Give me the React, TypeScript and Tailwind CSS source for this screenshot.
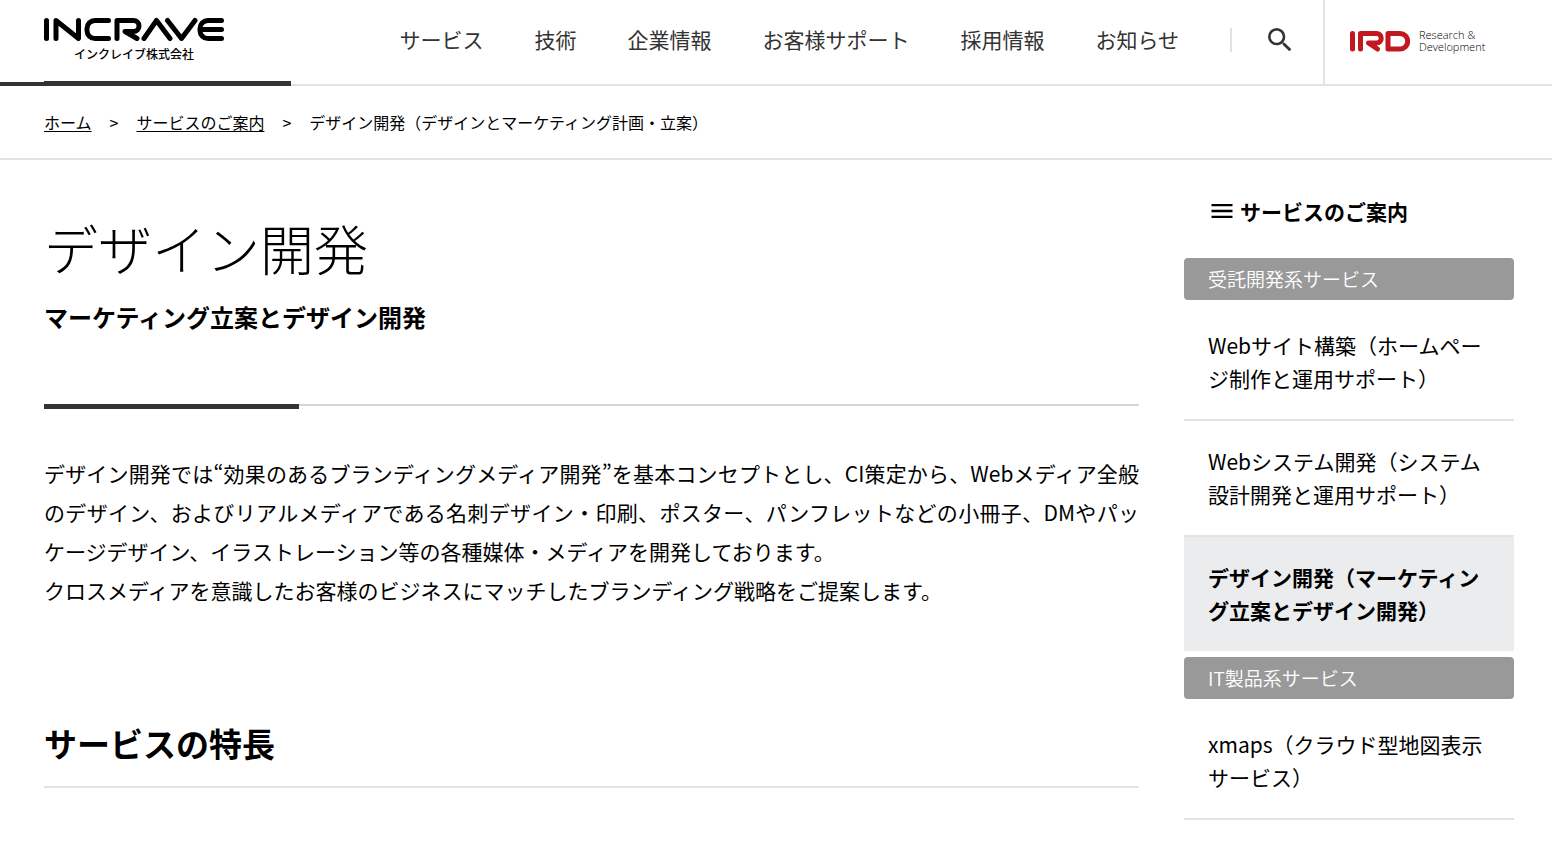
import { MdMenu, MdSearch } from 'react-icons/md';

interface MenuItem {
  label: string;
  active?: boolean;
}

interface MenuGroup {
  title: string;
  items: MenuItem[];
}

const navItems = ['サービス', '技術', '企業情報', 'お客様サポート', '採用情報', 'お知らせ'];

const menuGroups: MenuGroup[] = [
  {
    title: '受託開発系サービス',
    items: [
      { label: 'Webサイト構築（ホームページ制作と運用サポート）' },
      { label: 'Webシステム開発（システム設計開発と運用サポート）' },
      { label: 'デザイン開発（マーケティング立案とデザイン開発）', active: true },
    ],
  },
  {
    title: 'IT製品系サービス',
    items: [{ label: 'xmaps（クラウド型地図表示サービス）' }],
  },
];

function Logo() {
  return (
    <a href="#" className="flex w-[180px] flex-col items-center gap-[5px]" aria-label="INCRAVE">
      <svg
        viewBox="0 0 180 24"
        className="h-6 w-[180px]"
        fill="none"
        stroke="#000"
        strokeWidth="5"
        strokeLinecap="round"
        strokeLinejoin="round"
      >
        <path d="M2.5 3.500v18" />
        <path d="M12 21.500V3.500l22.500 18V3.500" />
        <path d="M64.500 3.500H51a8 8 0 0 0-8 8v2a8 8 0 0 0 8 8h13.500" />
        <path d="M73 21.500V3.500h16.500a5.500 5.500 0 0 1 0 11H81l12 7" />
        <path d="M100 21.500l12.500-18L126 21.500" />
        <path d="M123.500 3.500l14 18L151 3.500" />
        <path d="M177.500 3.500H164a8 8 0 0 0-8 8v2a8 8 0 0 0 8 8h13.500M157 12.500h20.500" />
      </svg>
      <span className="text-[12px] leading-4 font-medium text-black">インクレイブ株式会社</span>
    </a>
  );
}

function IrdLogo() {
  return (
    <a href="#" className="flex items-center gap-[9px]">
      <svg
        viewBox="0 0 60 22"
        className="h-[22px] w-[60px]"
        fill="none"
        stroke="#c2181f"
        strokeWidth="5"
        strokeLinecap="round"
        strokeLinejoin="round"
      >
        <path d="M2.500 3.500v15.500" />
        <path d="M10.500 19V3.500h16a4.500 4.500 0 0 1 0 9.500H18.500l9 6" />
        <path d="M38 3.500h12a7.750 7.750 0 0 1 0 15.500H38z" />
      </svg>
      <span className="font-['Open_Sans',sans-serif] text-[11px] leading-3 font-light text-black">
        Research &amp;
        <br />
        Development
      </span>
    </a>
  );
}

function Header() {
  return (
    <header className="relative flex h-[86px] border-b-2 border-[#e2e2e2] pl-11">
      <div className="pt-[17px]">
        <Logo />
      </div>
      <nav className="ml-auto flex items-center gap-[51px] pb-1 text-[21px] text-[#333]">
        {navItems.map((item) => (
          <a key={item} href="#" className="whitespace-nowrap">
            {item}
          </a>
        ))}
        <span className="h-6 w-[2px] bg-[#e2e2e2]" />
      </nav>
      <button type="button" className="mr-[27px] ml-8 pb-1" aria-label="検索">
        <MdSearch className="h-8 w-8 text-[#333]" />
      </button>
      <div className="flex w-[229px] items-center border-l-2 border-[#e2e2e2] pb-[2px] pl-[25px]">
        <IrdLogo />
      </div>
      <div className="absolute -bottom-[2px] left-0 h-1 w-11 bg-[#333]" />
      <div className="absolute -bottom-[2px] left-11 h-[5px] w-[247px] bg-[#333]" />
    </header>
  );
}

function Breadcrumb() {
  return (
    <nav className="flex h-[74px] items-center gap-[18px] border-b-2 border-[#e2e2e2] px-11" aria-label="パンくず">
      <a href="#" className="underline underline-offset-2">ホーム</a>
      <span>&gt;</span>
      <a href="#" className="underline underline-offset-2">サービスのご案内</a>
      <span>&gt;</span>
      <span>デザイン開発（デザインとマーケティング計画・立案）</span>
    </nav>
  );
}

function SideMenu() {
  return (
    <aside className="w-[330px] shrink-0 pt-9">
      <h2 className="flex items-center gap-1 pl-6 text-[21px] leading-[30px] font-bold">
        <MdMenu className="h-7 w-7" />
        サービスのご案内
      </h2>
      <div className="mt-8 flex flex-col gap-[6px]">
        {menuGroups.map((group) => (
          <section key={group.title}>
            <h3 className="mb-[5px] rounded bg-[#999] px-6 text-[19px] leading-[42px] font-[350] text-white">
              {group.title}
            </h3>
            <ul>
              {group.items.map((item) => (
                <li key={item.label}>
                  <a
                    href="#"
                    className={
                      item.active
                        ? 'block bg-[#ebecee] px-6 py-6 text-[21px] leading-[33px] font-bold'
                        : 'block border-b-2 border-[#e2e2e2] px-6 py-6 text-[21px] leading-[33px]'
                    }
                  >
                    {item.label}
                  </a>
                </li>
              ))}
            </ul>
          </section>
        ))}
      </div>
    </aside>
  );
}

export default function App() {
  return (
    <div lang="ja" className="bg-white font-['Noto_Sans_CJK_JP',sans-serif] text-black">
      <Header />
      <Breadcrumb />
      <div className="flex gap-[45px] pr-[38px] pl-11">
        <main className="min-w-0 flex-1 pt-12">
          <h1 className="text-[54px] leading-[80px] font-light">デザイン開発</h1>
          <p className="mt-[9px] text-2xl leading-10 font-bold">マーケティング立案とデザイン開発</p>
          <div className="mt-[67px] h-[5px] border-t-2 border-[#d6d6d6]">
            <div className="-mt-[2px] h-[5px] w-[255px] bg-[#333]" />
          </div>
          <p className="mt-[45px] text-justify text-[21px] leading-[39px]">
            デザイン開発では“効果のあるブランディングメディア開発”を基本コンセプトとし、CI策定から、Webメディア全般のデザイン、およびリアルメディアである名刺デザイン・印刷、ポスター、パンフレットなどの小冊子、DMやパッケージデザイン、イラストレーション等の各種媒体・メディアを開発しております。
            <br />
            クロスメディアを意識したお客様のビジネスにマッチしたブランディング戦略をご提案します。
          </p>
          <h2 className="mt-[109px] border-b-2 border-[#e2e2e2] pb-[19px] text-[33px] leading-[48px] font-bold">
            サービスの特長
          </h2>
        </main>
        <SideMenu />
      </div>
    </div>
  );
}
